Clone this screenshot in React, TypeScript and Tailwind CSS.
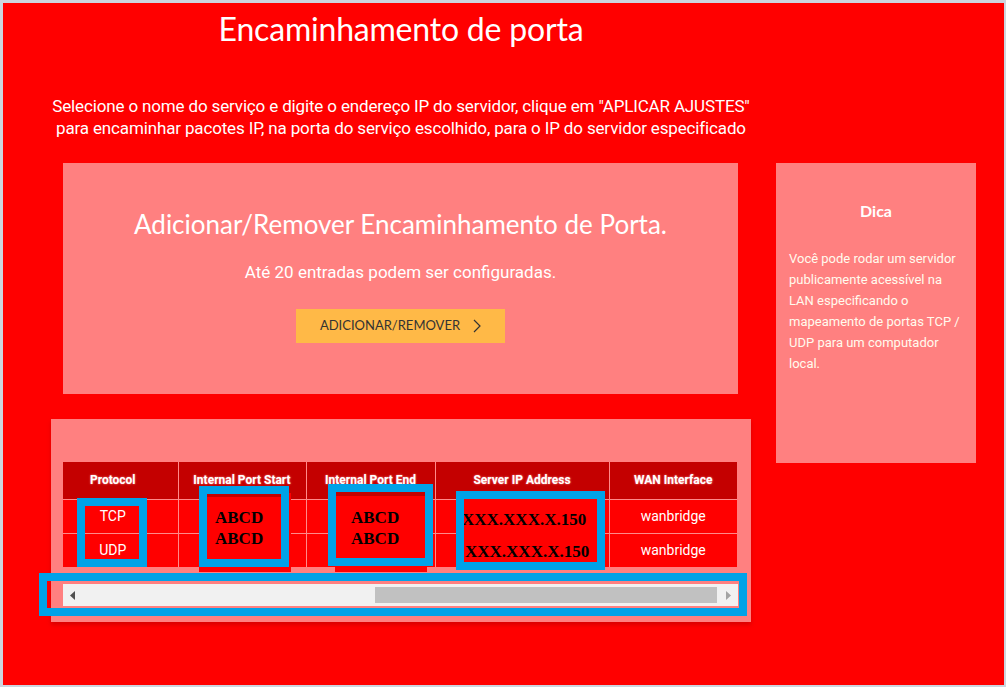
import React from "react";

export default function App() {
  const roboto = "font-['Roboto',sans-serif]";
  const lato = "font-['Lato','Noto_Sans',sans-serif]";
  const serif = "font-['Liberation_Serif',serif]";
  const th =
    "h-[37px] text-[12px] font-bold text-white text-center align-middle border-l border-[#ff8a8a] first:border-l-0 [text-shadow:0_0_2px_#ff9a9a]";
  const td =
    "h-[34px] text-[14px] text-white text-center align-middle border-l border-t border-[#ff8a8a] first:border-l-0";
  return (
    <div className="w-[1006px] h-[687px] bg-[#cdd5df] pt-[3px] pl-[3px] overflow-hidden">
      <div className={`relative w-[1001px] h-[682px] bg-[#ff0000] flex pl-[48px] ${roboto}`}>
        {/* left column */}
        <div className="w-[700px] flex flex-col items-center">
          <h1 className={`mt-[8px] h-[36px] leading-[36px] text-[32px] tracking-[-0.2px] text-white ${lato}`}>
            Encaminhamento de porta
          </h1>
          <p className="mt-[48px] text-[17px] leading-[22px] text-white text-center tracking-[-0.15px] whitespace-nowrap">
            Selecione o nome do serviço e digite o endereço IP do servidor, clique em "APLICAR AJUSTES"
            <br />
            para encaminhar pacotes IP, na porta do serviço escolhido, para o IP do servidor especificado
          </p>
          <div className="mt-[24px] self-start ml-[12px] w-[675px] h-[231px] bg-[#ff8080] flex flex-col items-center pt-[45px]">
            <h2 className={`h-[32px] leading-[32px] text-[26px] text-white ${lato}`}>
              Adicionar/Remover Encaminhamento de Porta.
            </h2>
            <p className="mt-[20px] h-[24px] leading-[24px] text-[17px] text-white">
              Até 20 entradas podem ser configuradas.
            </p>
            <button className={`mt-[25px] w-[209px] h-[34px] bg-[#ffb947] text-[#333333] text-[13px] flex items-center justify-center gap-[13px] ${lato}`}>
              <span>ADICIONAR/REMOVER</span>
              <svg width="8" height="14" viewBox="0 0 8 14" fill="none" stroke="#333" strokeWidth="1.2">
                <path d="M1 1l6 6-6 6" />
              </svg>
            </button>
          </div>
          <div className="mt-[25px] w-[700px] h-[203px] bg-[#ff8080] pt-[43px] pl-[12px] shadow-[0_3px_4px_rgba(150,0,0,0.35)]">
            <table className="w-[674px] table-fixed border-collapse">
              <colgroup>
                <col className="w-[115px]" />
                <col className="w-[128px]" />
                <col className="w-[129px]" />
                <col className="w-[174px]" />
                <col className="w-[128px]" />
              </colgroup>
              <thead>
                <tr className="bg-[#c40000]">
                  <th className={`${th} pr-[15px]`}>Protocol</th>
                  <th className={th}>Internal Port Start</th>
                  <th className={th}>Internal Port End</th>
                  <th className={th}>Server IP Address</th>
                  <th className={th}>WAN Interface</th>
                </tr>
              </thead>
              <tbody>
                {["TCP", "UDP"].map((p) => (
                  <tr key={p} className="bg-[#ff0000]">
                    <td className={`${td} text-[13px] pr-[15px]`}>{p}</td>
                    <td className={td}></td>
                    <td className={td}></td>
                    <td className={td}></td>
                    <td className={td}>wanbridge</td>
                  </tr>
                ))}
              </tbody>
            </table>
            {/* scrollbar */}
            <div className="mt-[17px] w-[675px] h-[22px] bg-[#f1f1f1] relative flex items-center">
              <svg className="absolute left-[7px] top-[7px]" width="6" height="9" viewBox="0 0 6 9">
                <path d="M5 0v9L0 4.5z" fill="#505050" />
              </svg>
              <div className="absolute left-[312px] top-[3px] w-[342px] h-[16px] bg-[#c1c1c1]" />
              <svg className="absolute right-[7px] top-[7px]" width="6" height="9" viewBox="0 0 6 9">
                <path d="M1 0v9l5-4.5z" fill="#a3a3a3" />
              </svg>
            </div>
          </div>
        </div>
        {/* right column */}
        <div className="ml-[25px] mt-[160px] w-[200px] h-[300px] bg-[#ff8080] px-[13px] pt-[38px]">
          <h3 className={`h-[20px] leading-[20px] text-center text-[16px] font-bold text-white ${lato}`}>Dica</h3>
          <p className="mt-[27px] text-[13px] leading-[21px] text-[#fffbee]">
            Você pode rodar um servidor publicamente acessível na LAN especificando o mapeamento de portas TCP / UDP para um computador local.
          </p>
        </div>

        {/* annotations */}
        <div className="absolute left-[74px] top-[495px] w-[70px] h-[69px] border-[8px] border-[#00a2e8]" />

        <div className="absolute left-[196px] top-[490px] w-[92px] h-[79px] bg-[#ff0000]" />
        <div className="absolute left-[196px] top-[483px] w-[90px] h-[81px] border-[8px] border-[#00a2e8] bg-[#ff0000]">
          <div className="h-[3px] bg-[#c40000]" />
          <div className={`pt-[10px] pl-[8px] text-[17px] leading-[21px] font-bold text-black ${serif}`}>
            ABCD
            <br />
            ABCD
          </div>
        </div>

        <div className="absolute left-[332px] top-[490px] w-[92px] h-[79px] bg-[#ff0000]" />
        <div className="absolute left-[325px] top-[481px] w-[105px] h-[82px] border-[8px] border-[#00a2e8] bg-[#ff0000]">
          <div className="h-[4px] bg-[#c40000]" />
          <div className={`pt-[11px] pl-[15px] text-[17px] leading-[21px] font-bold text-black ${serif}`}>
            ABCD
            <br />
            ABCD
          </div>
        </div>

        <div className="absolute left-[453px] top-[488px] w-[149px] h-[79px] border-[8px] border-[#00a2e8] bg-[#ff0000] overflow-hidden">
          <div className={`pt-[5px] ml-[-2px] text-[17px] leading-[32px] font-bold text-black whitespace-nowrap ${serif}`}>
            XXX.XXX.X.150
            <br />
            <span className="ml-[3px]">XXX.XXX.X.150</span>
          </div>
        </div>

        <div className="absolute left-[36px] top-[570px] w-[708px] h-[43px] border-[8px] border-[#00a2e8]" />
      </div>
    </div>
  );
}
